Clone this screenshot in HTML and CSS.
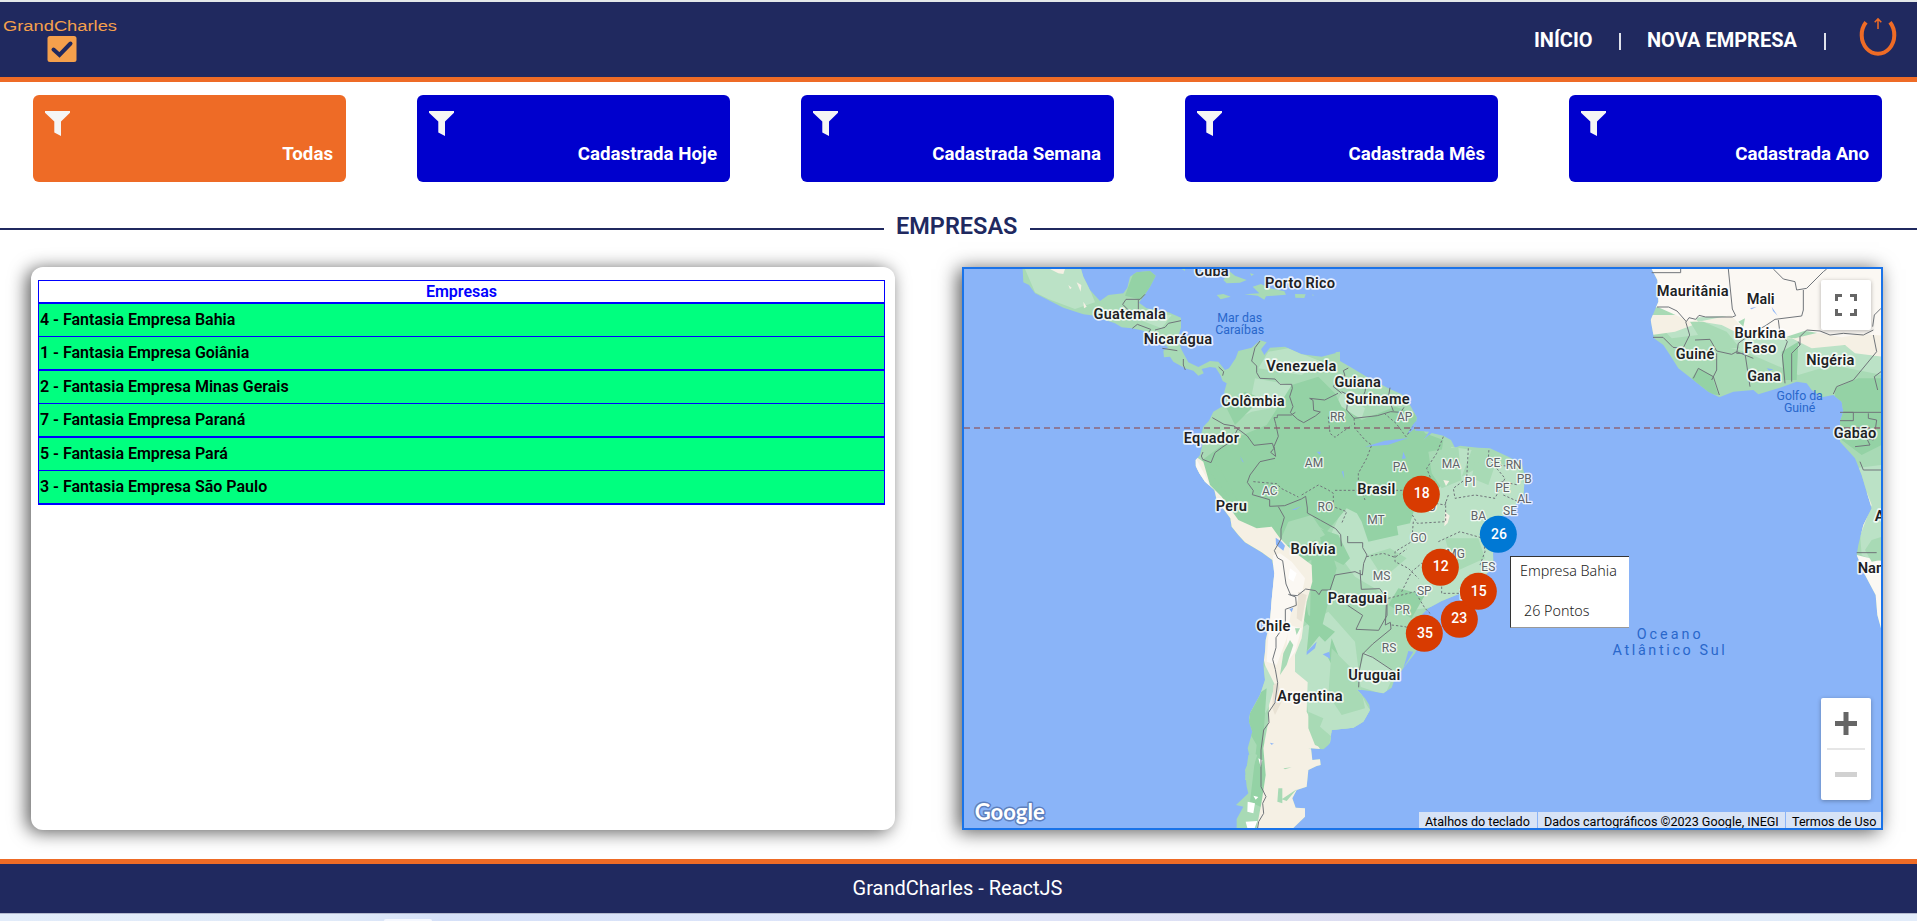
FILE: index.html
```html
<!DOCTYPE html>
<html lang="pt-BR">
<head>
<meta charset="utf-8">
<title>GrandCharles - ReactJS</title>
<link rel="stylesheet" href="styles.css">
</head>
<body>
<header class="header">
  <svg class="logo" width="120" height="50" viewBox="0 0 120 50">
    <text class="logo-text" x="3" y="16" textLength="114" lengthAdjust="spacingAndGlyphs">GrandCharles</text>
    <rect x="47.5" y="21" width="29" height="26" rx="2.5" fill="#f5a04c"/>
    <path d="M53.5 34.5l6 5.5 11-11.500" fill="none" stroke="#20295f" stroke-width="4" stroke-linecap="round"/>
  </svg>
  <nav class="nav">
    <a class="nav-home">INÍCIO</a><i class="sep"></i><a class="nav-new">NOVA EMPRESA</a><i class="sep"></i>
    <svg class="power" width="38" height="40" viewBox="0 0 38 40" fill="none" stroke="#ee6b26">
      <path d="M7 5.300A16.300 18.800 0 1 0 31 5.300" stroke-width="4"/>
      <path d="M19 12V2M15.700 5.200L19 1.900l3.300 3.300" stroke-width="1.500"/>
    </svg>
  </nav>
</header>

<section class="filters">
  <div class="card active"><svg class="funnel" viewBox="0 0 25 25"><path d="M0 0h25v1.800L16 10.500V25L9.300 21.500v-11L0 1.800z"/></svg><span>Todas</span></div>
  <div class="card"><svg class="funnel" viewBox="0 0 25 25"><path d="M0 0h25v1.800L16 10.500V25L9.300 21.500v-11L0 1.800z"/></svg><span>Cadastrada Hoje</span></div>
  <div class="card"><svg class="funnel" viewBox="0 0 25 25"><path d="M0 0h25v1.800L16 10.500V25L9.300 21.500v-11L0 1.800z"/></svg><span>Cadastrada Semana</span></div>
  <div class="card"><svg class="funnel" viewBox="0 0 25 25"><path d="M0 0h25v1.800L16 10.500V25L9.300 21.500v-11L0 1.800z"/></svg><span>Cadastrada Mês</span></div>
  <div class="card"><svg class="funnel" viewBox="0 0 25 25"><path d="M0 0h25v1.800L16 10.500V25L9.300 21.500v-11L0 1.800z"/></svg><span>Cadastrada Ano</span></div>
</section>

<div class="title"><i class="rule"></i><h1>EMPRESAS</h1><i class="rule"></i></div>

<main class="content">
  <section class="panel">
    <div class="list">
      <div class="list-head">Empresas</div>
      <div class="row">4 - Fantasia Empresa Bahia</div>
      <div class="row thick">1 - Fantasia Empresa Goiânia</div>
      <div class="row">2 - Fantasia Empresa Minas Gerais</div>
      <div class="row thick">7 - Fantasia Empresa Paraná</div>
      <div class="row">5 - Fantasia Empresa Pará</div>
      <div class="row thick">3 - Fantasia Empresa São Paulo</div>
    </div>
  </section>

  <section class="map">
    <svg class="map-canvas" width="917" height="559" viewBox="27 42 2751 1677">
      <defs>
        <path id="america" d="M203 42L205 82L222 90L240 115L290 140L325 158L385 178L420 182L450 195L480 205L500 217L530 220L560 226L590 238L612 262L640 277L625 287L627 307L645 305L655 320L690 340L715 347L730 362L746 355L740 342L765 336L782 338L796 360L803 378L815 385L808 410L812 440L800 455L775 470L762 497L745 515L738 540L742 570L735 600L722 615L722 633L733 655L750 680L778 705L785 735L800 755L826 790L830 815L850 840L870 862L920 892L952 915L958 955L950 1035L945 1100L932 1155L930 1190L925 1230L930 1275L915 1320L885 1375L882 1400L892 1430L878 1480L885 1510L870 1545L875 1595L880 1615L843 1650L865 1655L845 1692L845 1719L1015 1719L1050 1685L1050 1660L1022 1658L1012 1630L1025 1605L1055 1595L1060 1545L1085 1533L1097 1530L1095 1513L1072 1515L1068 1480L1105 1483L1125 1465L1130 1425L1195 1418L1225 1400L1245 1365L1243 1350L1230 1330L1205 1303L1245 1308L1285 1315L1310 1298L1318 1275L1345 1240L1380 1195L1395 1160L1390 1120L1400 1080L1420 1060L1460 1038L1510 1018L1555 1000L1590 965L1615 925L1613 860L1625 795L1670 765L1705 720L1710 665L1700 625L1660 605L1605 580L1570 578L1515 572L1500 578L1488 555L1465 542L1430 534L1405 555L1422 530L1380 527L1385 487L1365 450L1340 418L1300 400L1240 368L1190 338L1155 318L1155 290L1140 295L1100 305L1040 298L990 275L945 278L928 300L918 283L935 262L915 256L890 278L850 288L842 310L822 340L810 345L790 320L765 318L730 336L700 322L680 285L668 250L678 218L678 188L640 172L575 160L552 143L570 118L585 95L602 62L585 48L545 52L525 65L517 98L505 115L460 120L435 138L405 105L385 65L378 42Z"/>
        <path id="africa" d="M2090 42L2107 75L2110 140L2087 195L2097 250L2125 270L2145 300L2170 340L2215 375L2260 410L2293 427L2335 410L2395 405L2410 418L2475 398L2525 380L2555 385L2570 405L2600 427L2635 420L2660 440L2665 470L2655 500L2655 560L2700 610L2720 660L2735 710L2750 760L2725 810L2710 870L2705 900L2730 960L2762 1020L2767 1080L2778 1120L2778 42Z"/>
        <clipPath id="america-clip"><use href="#america"/></clipPath>
        <clipPath id="africa-clip"><use href="#africa"/></clipPath>
      </defs>
      <rect x="27" y="42" width="2751" height="1677" fill="#8ab4f8"/>
      <g fill="#a8dab5">
        <path d="M785 120l20-3 22 8-30 8zM805 75l20-25 15 12 35 13-20 8-40 2zM868 118l45-3-20-20 25-8 25 12 45 10 5 10-60 5-5 10-20-12zM1020 117l32 1-4 11-27-1zM680 42h10v6zM885 55l12 3-8 5zM1072 118l5 3-4 1zM1141 292l13-2-4 12z"/>
        <use href="#america"/>
      </g>
      <g clip-path="url(#america-clip)">
        <path fill="#bbe2c6" d="M210 42h170l40 100-60 20-80-30-40-20zM490 170l160 10-30 40zM940 290l60-10 100 40-60 40-130-20zM900 370l110 20-10 60-110 20-40 20 40-70zM1160 410l70 50-10 30-80-30zM1180 725l220-20 90-130 60 10-30 80 90-50 80 30 40 100-90 100-20 110-100 90-150 20-170-100-80-110zM1020 1130l100-60 80 90 20 160 30 60-50 40-90 50-50-90-10-80-50-60zM930 1230l35 20-15 90-40 70-30-20zM1230 1190l90 60-30 70-90-30z"/>
        <path fill="#bbe2c6" d="M1050 1130l60-20 60 80 40 130 40 50-30 60-110 5-40-60 10-70-60-80z"/>
        <path fill="#94d2a5" d="M540 42h70l-20 100-80-20zM1010 390l80-25 50 50 20 40 60 40 100-40 60 20 30 60 55 20-10 70 50 20-60 60-50 5-30 95-90 20-40-35-60-30-60 70-45-30 20 100-60 40 30 140 80 50-30 30-60-60-70-150-100-70-130-90-45-70 30-100 80-60 120-50zM1090 820l60 20 35 70-20 20-60-30zM1070 880l50-20 25 80-50 200-40 50 10-100zM1330 1000l80 20-40 70-70-40zM1180 730l120 10 50-15-30 55 10 60-90 20-20-60zM810 450l60-40 50 20-80 80zM890 1330l45-30-10 150 15 60-15 150-40-20 20-170-35-60zM1130 1150l20 50 20 80 20 20-40-30-30-60z"/>
        <path fill="#a8dab5" d="M1420 590l90-15 10 100-60 25-30-45zM1240 900l65-20 50 30-70 60zM1470 850l100 0 20 60-90 40zM1130 1180l80 80 20 100-70 20-40-60zM1560 620l60 10-20 60-50-20zM1000 800l70-20 40 60-60 30-80 0z"/>
        <path fill="#f5f0e4" d="M715 600L745 620L765 690L800 725L850 795L905 820L950 815L975 850L1010 885L1070 930L1072 980L1055 1040L1045 1110L1040 1150L1020 1200L1020 1250L1058 1282L1055 1370L1070 1400L1090 1430L1075 1450L1100 1490L1060 1480L1110 1500L1100 1719L905 1719L920 1640L932 1560L925 1480L940 1400L942 1350L960 1290L930 1230L900 1100L960 930L800 860L690 640Z"/>
        <path fill="#f5f0e4" d="M285 42h45l-5 15-15-2zM340 90l10 8-5 5zM365 82l14 8-2 20zM385 140l10 15-8 5zM1470 770l14 12-6 22-10 10zM1400 730l30 8-8 20zM1465 675l18 3-10 15z"/>
        <path fill="#fbf8f3" d="M720 605l30 55 30 70-50-40zM955 900l20-5 35 25 40 50-10 50-30 40-15 90-30 80-30-10 10-150zM1000 1110l40 10-20 70-30 40z"/>
        <path fill="#e9e2d4" d="M1030 1010l25 10-15 80-15-10zM955 1290l15-10 10 60-20 40-8-20z"/>
        <path fill="#fff" d="M1005 940l20 15-10 25-15-10zM878 1640l22 5-5 30-18-5zM872 1700l35-2-8 21h-22zM895 1622l15 4-8 8zM910 1510l12 6-5 20z"/>
        <path fill="#a8dab5" d="M1060 1370l45 20-10 25 35 30-15 40-35-15-20-50zM970 1600h12v45l-15-5zM980 1633l45-30-30 35zM985 1195l20-40 10 15-20 60-20 30zM1020 1120l15 0-10 20zM985 1540l25-3-20 6z"/>
        <path fill="#94d2a5" d="M770 610l30 40 55 100-30-20-60-80z"/>
        <path fill="#8ab4f8" d="M962 848l18 12 10 12-5 15-22-18zM1103 1198l20-8 3 22zM1055 1190l30-30-5 20-25 20zM1003 1062l12-4-5 14zM1160 650l5-3 3 25zM1230 575l60-18 70-8-60 20zM1390 490l-10 30-25 20 18-30zM1345 1240l30-50-15-2zM945 1463l12 3-8 3zM1345 590l8 20-12 2zM1010 765l30-12-20 12zM855 603l12 20-6-4zM1085 590l12 0-2 10z"/>
      </g>
      <path fill="#a8dab5" d="M880 1500l15-5 12 5-5 15-20 60-12 0zM870 1560l8 5-6 8z"/>
      <use href="#africa" fill="#a8dab5"/>
      <g clip-path="url(#africa-clip)">
        <path fill="#bbe2c6" d="M2090 190l120-20 200 30 120 60 250 20v80l-150-30-100 30-160-70-80-20-60-30-80 10zM2700 640l80-10v300l-60-30z"/>
        <path fill="#f5f0e4" d="M2080 180h130l20 20 100-20 60 60 130 10 80-20 180 0v75l-80-10-30-25-100 10-60-30-90 0-60-10-60-30-60-10-80 30-70 10z"/>
        <path fill="#fbf8f3" d="M2080 42h700v200l-60-5-60 10-110-20-60 20-120-20-40-45-100 5-20 15-100-45h-40zM2705 900l80 20v220l-30-10-50-130z"/>
        <path fill="#a8dab5" d="M2205 200l40 0 70 30 40 50-70 0-50-30zM2350 200l20-10-5 25z"/>
        <path fill="#94d2a5" d="M2210 370l20-30 40 20 20 60-40-5zM2480 290l50-30-5 115h-40zM2640 400l70-30 70 0v200l-60 30-80-60z"/>
        <path fill="#f5f0e4" d="M2705 870l30-80 15-40-15-40-5 5-30 180z"/>
        <path fill="#a8dab5" d="M2730 885l20-30 30-10v70l-30 5z"/>
        <path fill="#8ab4f8" d="M2385 160l20-5-15 8zM2450 155l18 27-14-14zM2435 340l20 3-12 5z"/>
      </g>
      <g fill="none" stroke="#70757a" stroke-width="3" stroke-linejoin="round">
        <path d="M570 118l-15 15h-42l-10 15 20 20M550 135v35M532 220l15-12 40 15-5 8M600 225l30-8 10-12 38-8M622 280l45 7M685 312v18l6 15M803 362l3-12-15-14M915 258l-15 20-10 40 15 15 0 20 10 17 45 2 15 16h35l2 12-8 25 10 30-8 18 22 20 18 10 35-20 15-12-20-5-2-30-10-6 45 5 40-20M1160 415l-25-20 15-25 20-8-5-15 15-8M1160 410l20 10-5 45 22 25 70-8 40-12 30 2 10-15M1235 380l-5 30-10 25M1305 398l-5 30 15 40M772 488l35 20 30 5 40 30 20 28 55-6 5 15-10 12 15 12-5-30 13-30-8-38-5-18h10v-8h42l12-8M850 518l-20 40-30 20-20 15-12 30-25-10-4-10 5-12M960 610l-45 10-30 40-8 22 18 25-3 12 52 15v20l45-2 50-20 13-8 5 35v15l40 22 45 25 15 18 2 35M970 755l18 32-10 35v30l-20 35 10 22 15 8 10 70 14 33 20 2 25-20 30 5 10 12 8-14h25l15-45 60-10 22 10 4-35 10-25-13-22v-15h-45v-20M1000 1018l22 8 2 25-33 12v45l-28 40 0 30-10 35 8 30 7 40-8 60-20 30 2 30-16 22-8 60 0 50 0 60 15 30-10 20 3 30-15 25-5 30M1215 945l4 58 55-2 22 30v50l-25 45-68-3 20-42-45-30M1295 1030l-4 80 15-8 2 20-55 45-30 30-10 50-2 50M1223 1195l30 12 60 40"/>
        <path d="M2090 53h87v-11M2320 42l12 120 10 20-10 4-80 0-20-5-10 12-20-5-8 12-28-32-25-12h-35M2455 42l30 30 35 8 5 25 30-5 50-50 10-8M2545 105v60l-5 18-80 10-30 20-40 22-40 30-5 30h25l15 100M2192 200l12 40-20 40-30-3-30-30h-30M2220 255l45-2 20 35 45 10 15-8 50 20M2215 370l15-30 45 25 18 55M2285 295v50l-15 30M2470 195l5 40 22 25-15 40 8 85M2530 260l5 10-25 25v85M2535 270v-25l20-20 40 3 30 12 40-5 60 5 30-15M2755 240l10 50-70 85-50 20-10 22M2778 160l-20 20-5 35M2778 350l-20 15 10 40M2655 472h123M2665 472h30v25h-40M2740 475v15l25 5-5 35-5 25-20-5 10 20-45 5M2715 620l10 25h55M2705 893h60"/>
      </g>
      <g fill="none" stroke="#70757a" stroke-width="3" stroke-dasharray="7 6">
        <path d="M1120 485l5 50 15 12 20-15 30-20M1197 490l3 30 30 35 20 15-15 40-25 45v30l20 50M1288 475l35 30 30 40 20-30M895 680l70 6 15 15 50 25M1040 720l50-30 30 15 15 10v40l40 15-15 35M1140 706h260M1465 545l-20 50-30 45 20 50-35 80M1540 580l-5 90-40 30 5 30 60-10 60 10 30-60-50-60 2-30M1620 630l60 5M1640 680l50 10M1645 720l45 20M1372 780l15 25 85-5v-60M1375 800l-5 60-50 30 0 30 40 20 30 30M1235 905l50-10 35 12 35-25M1450 860l65-30 70 20 5 40-15 40 40 20M1340 1010l30-60 30-25 60 40 0 50 60 0M1300 1030l80-20 30 50 20 20M1310 1110l40 5 40 15M1480 720l-10 30-60-10"/>
      </g>
      <path d="M27 519H2778" stroke="#8b6070" stroke-opacity=".7" stroke-width="6" stroke-dasharray="18 12" fill="none"/>

      <g class="country" text-anchor="middle">
        <text x="770" y="63" textLength="102">Cuba</text><text x="1035" y="100" textLength="210">Porto Rico</text>
        <text x="524" y="192" textLength="217">Guatemala</text><text x="669" y="267" textLength="205">Nicarágua</text>
        <text x="1039" y="349" textLength="210">Venezuela</text><text x="1208" y="395" textLength="139">Guiana</text>
        <text x="894" y="453" textLength="190">Colômbia</text><text x="1268" y="448" textLength="192">Suriname</text>
        <text x="769" y="564" textLength="166">Equador</text><text x="829" y="768" textLength="93">Peru</text>
        <text x="1264" y="717" textLength="114">Brasil</text><text x="1074" y="897" textLength="135">Bolívia</text>
        <text x="1207" y="1045" textLength="178">Paraguai</text><text x="955" y="1127" textLength="102">Chile</text>
        <text x="1258" y="1275" textLength="156">Uruguai</text><text x="1065" y="1338" textLength="196">Argentina</text>
        <text x="2213" y="122" textLength="215">Mauritânia</text><text x="2417" y="148" textLength="84">Mali</text>
        <text x="2415" y="248" textLength="153">Burkina</text><text x="2416" y="293" textLength="96">Faso</text>
        <text x="2220" y="312" textLength="116">Guiné</text><text x="2626" y="331" textLength="144">Nigéria</text>
        <text x="2427" y="377" textLength="101">Gana</text><text x="2700" y="550" textLength="128">Gabão</text>
        <text x="2759" y="799" text-anchor="start">Angola</text><text x="2708" y="955" text-anchor="start">Namíbia</text>
      </g>
      <g class="state" text-anchor="middle">
        <text x="1147" y="498">RR</text><text x="1349" y="499">AP</text><text x="1077" y="636">AM</text><text x="1335" y="649">PA</text>
        <text x="944" y="720">AC</text><text x="1111" y="767">RO</text><text x="1263" y="807">MT</text><text x="1391" y="861">GO</text>
        <text x="1488" y="638">MA</text><text x="1545" y="694">PI</text><text x="1614" y="635">CE</text><text x="1676" y="643">RN</text>
        <text x="1708" y="683">PB</text><text x="1642" y="711">PE</text><text x="1708" y="744">AL</text><text x="1665" y="780">SE</text>
        <text x="1570" y="796">BA</text><text x="1420" y="768">TO</text><text x="1502" y="910">MG</text><text x="1600" y="948">ES</text>
        <text x="1280" y="976">MS</text><text x="1408" y="1021">SP</text><text x="1342" y="1078">PR</text><text x="1302" y="1192">RS</text><text x="1535" y="1033">RJ</text>
      </g>
      <g class="sea" text-anchor="middle">
        <text x="854" y="201" textLength="135">Mar das</text><text x="854" y="237" textLength="147">Caraíbas</text>
        <text x="2534" y="435" textLength="139">Golfo da</text><text x="2534" y="471" textLength="94">Guiné</text>
        <text class="ocean" x="2141" y="1152" textLength="192">Oceano</text><text class="ocean" x="2141" y="1201" textLength="337">Atlântico Sul</text>
      </g>
      <g class="pins" text-anchor="middle">
        <circle cx="1399" cy="718" r="55.500"/><text x="1400" y="729">18</text>
        <circle class="selected" cx="1630" cy="838" r="55.500"/><text x="1632" y="852">26</text>
        <circle cx="1456" cy="937" r="55.500"/><text x="1457" y="948">12</text>
        <circle cx="1513" cy="1093" r="55.500"/>
        <circle cx="1570" cy="1009" r="55.500"/><text x="1571" y="1023">15</text><text x="1513" y="1104">23</text>
        <circle cx="1408" cy="1135" r="55.500"/><text x="1410" y="1149">35</text>
      </g>
      <text class="brand" x="59" y="1694" textLength="210" lengthAdjust="spacingAndGlyphs">Google</text>
    </svg>
    <div class="tooltip"><span>Empresa Bahia</span><span class="points">26 Pontos</span></div>
    <button class="fullscreen" aria-label="Tela cheia"><svg width="22" height="22" viewBox="0 0 22 22" fill="none" stroke="#666" stroke-width="3"><path d="M1.500 7V1.500H7M15 1.500h5.500V7M20.500 15v5.500H15M7 20.500H1.500V15"/></svg></button>
    <div class="zoom"><svg width="50" height="102" viewBox="0 0 50 102"><path d="M14 25.500h22M25 14v23" stroke="#666" stroke-width="5"/><path d="M6 51h38" stroke="#e6e6e6" stroke-width="2"/><path d="M14 76.500h22" stroke="#d1d1d1" stroke-width="5"/></svg></div>
    <div class="credits"><span class="keys">Atalhos do teclado</span><span class="data">Dados cartográficos ©2023 Google, INEGI</span><span class="terms">Termos de Uso</span></div>
  </section>
</main>

<footer class="footer">GrandCharles - ReactJS</footer>
<div class="desktop-edge"><i class="tab"></i></div>
</body>
</html>
```
FILE: styles.css
```css
* { box-sizing: border-box; }
body {
  margin: 0;
  height: 921px;
  overflow: hidden;
  display: flex;
  flex-direction: column;
  background: #fff;
  border-top: 2px solid #e3e8e9;
  font-family: Roboto, "Liberation Sans", sans-serif;
}
.header {
  height: 80px;
  flex: none;
  display: flex;
  justify-content: space-between;
  background: #20295f;
  border-bottom: 5px solid #ee6b26;
}
.logo { margin-top: 13px; }
.logo-text { font: 15.5px "Liberation Sans", sans-serif; fill: #f5a04c; }
.nav {
  display: flex;
  align-items: center;
  padding-right: 20px;
  color: #fff;
  font-size: 20px;
  font-weight: 700;
}
.nav a { white-space: nowrap; }
.nav-home { width: 59px; }
.nav-new { width: 151px; }
.sep { width: 2px; height: 17px; margin: 3px 26px 0; background: #dfe1ea; }
.power { margin: -5px 0 0 7px; }
.filters {
  flex: none;
  display: grid;
  grid-template-columns: repeat(5, 313px);
  gap: 71px;
  padding: 13px 0 0 33px;
}
.card {
  height: 87px;
  padding: 16px 13px 15px 12px;
  display: flex;
  flex-direction: column;
  justify-content: space-between;
  background: #0000cd;
  border-radius: 6px;
}
.card.active { background: #ee6b26; }
.funnel { width: 25px; height: 25px; fill: #f5f5f5; }
.card span { align-self: flex-end; color: #fff; font-size: 18.72px; line-height: 25px; font-weight: 700; white-space: nowrap; }
.title {
  flex: none;
  height: 85px;
  padding-top: 29px;
  display: flex;
  gap: 12px;
}
.title h1 { margin: 0; width: 122px; font-size: 23.5px; line-height: 30px; font-weight: 600; color: #20295f; }
.rule { flex: 1 1 auto; height: 2px; margin-top: 17px; background: #20295f; }
.rule:first-child { flex: 0 0 884px; }
.content {
  flex: none;
  display: flex;
  gap: 67px;
  padding-left: 31px;
  height: 563px;
}
.panel {
  width: 864px;
  padding: 13px 10px 0 7px;
  border-radius: 12px;
  background: #fff;
  box-shadow: -4px 2px 18px rgba(0, 0, 0, .65);
}
.list { border: 1px solid #0000ff; border-bottom: 0; font-size: 16px; font-weight: 600; }
.list-head { height: 23px; line-height: 21px; text-align: center; color: #0000ff; border-bottom: 2px solid #0000ff; }
.row { height: 33px; padding-left: 1px; line-height: 31px; background: #00ff7f; color: #000; border-bottom: 1px solid #0000ff; }
.row.thick { height: 34px; line-height: 32px; border-bottom-width: 2px; }
.map {
  position: relative;
  width: 921px;
  border: 2px solid #1a73e8;
  box-shadow: -4px 2px 18px rgba(0, 0, 0, .65);
}
.map-canvas { display: block; font-family: Roboto, sans-serif; }
.country, .state { paint-order: stroke; stroke: #fff; stroke-opacity: .8; stroke-linejoin: round; }
.country { font-size: 44px; font-weight: 600; fill: #202124; stroke-width: 10px; }
.state { font-size: 36px; fill: #5f6368; stroke-width: 8px; }
.sea { font-size: 37px; fill: #2967cb; }
.ocean { font-size: 43px; }
.pins { font-size: 42px; font-weight: 500; fill: #fff; }
.pins circle { fill: #d83b01; }
.pins .selected { fill: #0078d4; }
.brand { font-family: Lato, sans-serif; font-size: 68px; font-weight: 700; fill: #fff; paint-order: stroke; stroke: #5d7fbd; stroke-width: 9px; stroke-linejoin: round; }
.tooltip {
  position: absolute;
  left: 546px;
  top: 287px;
  width: 119px;
  height: 72px;
  padding: 2px 0 0 9px;
  display: flex;
  flex-direction: column;
  gap: 16px;
  background: #fff;
  border: 1px solid #333;
  border-right: 0;
  border-bottom-color: #999;
  font: 300 14.3px/24px "Noto Sans", "Open Sans", sans-serif;
  color: #222;
  white-space: nowrap;
}
.points { padding-left: 4px; }
.fullscreen, .zoom { position: absolute; right: 10px; width: 50px; background: #fff; border-radius: 2px; box-shadow: 0 1px 4px rgba(0, 0, 0, .3); }
.fullscreen { top: 11px; height: 50px; padding: 0; border: 0; display: grid; place-items: center; }
.zoom { bottom: 28px; height: 102px; }
.zoom svg { display: block; }
.credits {
  position: absolute;
  right: 0;
  bottom: 0;
  display: flex;
  gap: 1px;
  height: 16px;
  font-size: 12.6px;
  line-height: 19px;
  color: #000;
  white-space: nowrap;
}
.credits span { padding-left: 6px; background: rgba(245, 245, 245, .72); overflow: hidden; }
.keys { width: 118px; }
.data { width: 247px; }
.terms { width: 95px; }
.footer {
  flex: none;
  height: 54px;
  margin-top: 29px;
  border-top: 5px solid #ee6b26;
  background: #20295f;
  color: #fff;
  font-size: 20px;
  line-height: 49px;
  text-align: center;
  text-indent: -2px;
}
.desktop-edge {
  flex: none;
  height: 8px;
  border-top: 1px solid #b5bbd0;
  background: linear-gradient(90deg, #e2ecfa 0, #e0eaf8 330px, #d5e0f8 440px, #dfe6fa 900px, #dcdcf0 1400px, #dfeaf8 1600px, #e2ecfa 100%);
}
.tab { display: block; width: 48px; height: 2px; margin: 5px 0 0 384px; background: #f5f8ff; border-radius: 4px 4px 0 0; }
```
